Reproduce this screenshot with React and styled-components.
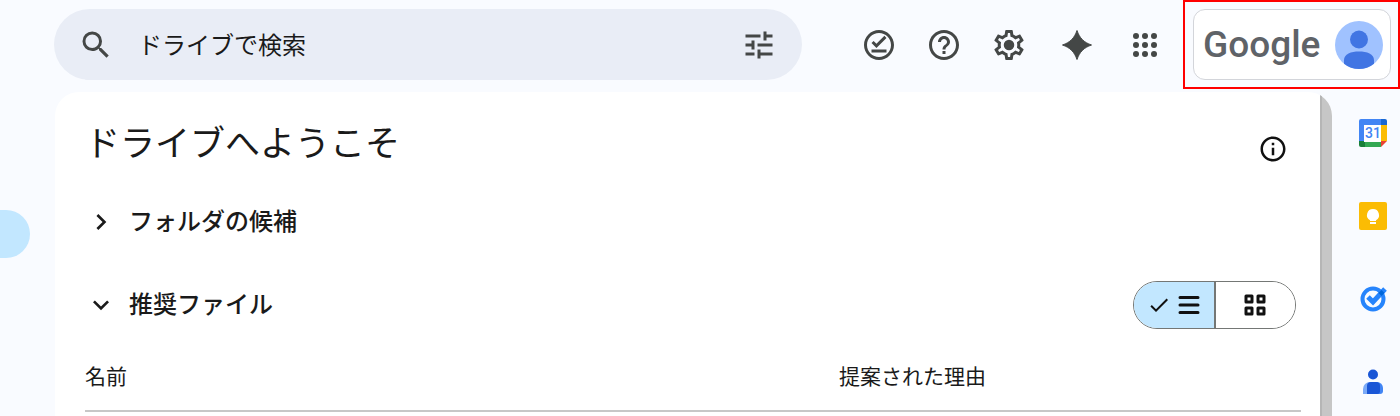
import React, { useState } from 'react';
import styled, { createGlobalStyle } from 'styled-components';
import {
  MdCheck,
  MdChevronRight,
  MdExpandMore,
  MdHelpOutline,
  MdInfoOutline,
  MdOutlineOfflinePin,
  MdSearch,
  MdTune,
} from 'react-icons/md';

const GlobalStyle = createGlobalStyle`
  * {
    box-sizing: border-box;
  }
  body {
    margin: 0;
    background: #f9fbff;
    color: #1a1a1a;
    font-family: 'Noto Sans CJK JP', sans-serif;
    overflow: hidden;
  }
`;
const Page = styled.div`
  display: flex;
  flex-direction: column;
  min-height: 100vh;
`;
const Header = styled.header`
  display: flex;
  align-items: flex-start;
  justify-content: space-between;
  height: 92px;
  padding-left: 54px;
`;
const Search = styled.form`
  display: flex;
  align-items: center;
  flex: 0 1 748px;
  height: 71px;
  margin-top: 9px;
  padding: 0 25px 0 24px;
  border-radius: 36px;
  background: #e9edf6;
`;
const IconButton = styled.button`
  display: flex;
  align-items: center;
  justify-content: center;
  flex: none;
  width: ${(props) => props.$size || 36}px;
  height: ${(props) => props.$size || 36}px;
  padding: 0;
  border: 0;
  background: none;
  color: ${(props) => props.$color || '#444746'};
`;
const SearchInput = styled.input`
  flex: 1;
  min-width: 0;
  height: 36px;
  padding: 0 24px 2px;
  border: 0;
  outline: 0;
  background: none;
  color: #1a1a1a;
  font: 400 24px 'Noto Sans CJK JP', sans-serif;
  &::placeholder {
    color: #1a1a1a;
    opacity: 1;
  }
`;
const Tools = styled.div`
  display: flex;
  align-items: flex-start;
`;
const Actions = styled.nav`
  display: flex;
  align-items: center;
  gap: 29px;
  height: 89px;
  padding-right: 20px;
`;
const Highlight = styled.div`
  height: 89px;
  padding: 7px 7px 7px 8px;
  border: 2px solid #f00;
`;
const Account = styled.button`
  display: flex;
  align-items: center;
  justify-content: space-between;
  width: 198px;
  height: 71px;
  padding: 0 7px 0 9px;
  border: 1px solid #d3d5da;
  border-radius: 12px;
  background: #fff;
`;
const Brand = styled.span`
  color: #5f6368;
  font: 500 37px/48px Roboto, sans-serif;
`;
const Body = styled.div`
  display: flex;
  flex: 1;
`;
const Rail = styled.aside`
  flex: none;
  width: 55px;
  padding-top: 118px;
`;
const RailItem = styled.a`
  display: block;
  width: 30px;
  height: 48px;
  border-radius: 0 24px 24px 0;
  background: #c2e7ff;
`;
const Panel = styled.main`
  display: flex;
  flex: 1;
  min-width: 0;
  border-radius: 24px 24px 0 0;
  background: #fff;
  overflow: hidden;
`;
const Content = styled.div`
  flex: 1;
  min-width: 0;
  padding: 24px 19px 0 30px;
`;
const Scrollbar = styled.div`
  flex: none;
  width: 12px;
  border-left: 2px solid #b5b5b5;
  background: #c6c6c6;
`;
const TitleRow = styled.div`
  display: flex;
  align-items: flex-start;
  justify-content: space-between;
  height: 56px;
  padding-right: 13px;
`;
const Title = styled.h1`
  margin: 0;
  font-size: 35px;
  font-weight: 400;
  line-height: 50px;
`;
const InfoSlot = styled.div`
  padding-top: 18px;
`;
const Section = styled.section`
  display: flex;
  align-items: center;
  justify-content: space-between;
  height: 48px;
  margin-top: ${(props) => props.$gap}px;
  padding-right: 5px;
`;
const SectionTitle = styled.h2`
  margin: 0;
  font-size: 24px;
  font-weight: 500;
`;
const Toggle = styled.button`
  display: flex;
  align-items: center;
  gap: 12px;
  padding: 0;
  border: 0;
  background: none;
  color: inherit;
  font: inherit;
`;
const ToggleLabel = styled.span`
  padding-bottom: 5px;
`;
const ViewSwitch = styled.div`
  display: flex;
  width: 163px;
  height: 48px;
  border: 1px solid #747775;
  border-radius: 24px;
  overflow: hidden;
`;
const ViewButton = styled.button`
  display: flex;
  align-items: center;
  justify-content: center;
  gap: 7px;
  flex: 1;
  padding: 0;
  border: 0;
  background: ${(props) => (props.$active ? '#c2e7ff' : '#fff')};
  color: #111;
  & + & {
    border-left: 2px solid #747775;
  }
`;
const Table = styled.table`
  width: 100%;
  margin-top: 22px;
  border-collapse: collapse;
  table-layout: fixed;
`;
const Th = styled.th`
  width: ${(props) => props.$width};
  height: 60px;
  padding: 0 0 12px;
  border-bottom: 2px solid #c7c7c7;
  font-size: 21px;
  font-weight: 400;
  line-height: 30px;
  text-align: left;
`;
const SidePanel = styled.nav`
  display: flex;
  flex-direction: column;
  align-items: center;
  gap: 51px;
  flex: none;
  width: 68px;
  padding: 25px 0 0 14px;
`;
const SideLink = styled.a`
  display: block;
  width: 32px;
  height: 32px;
`;

const GearIcon = () => (
  <svg width="36" height="36" viewBox="0 0 24 24" fill="currentColor">
    <path d="M19.43 12.98c.04-.32.07-.64.07-.98 0-.34-.03-.66-.07-.98l2.11-1.65c.19-.15.24-.42.12-.64l-2-3.46c-.09-.16-.26-.25-.44-.25-.06 0-.12.01-.17.03l-2.49 1c-.52-.4-1.08-.73-1.69-.98l-.38-2.65C14.46 2.18 14.25 2 14 2h-4c-.25 0-.46.18-.49.42l-.38 2.65c-.61.25-1.17.59-1.69.98l-2.49-1c-.06-.02-.12-.03-.18-.03-.17 0-.34.09-.43.25l-2 3.46c-.13.22-.07.49.12.64l2.11 1.65c-.04.32-.07.65-.07.98 0 .33.03.66.07.98l-2.11 1.65c-.19.15-.24.42-.12.64l2 3.46c.09.16.26.25.44.25.06 0 .12-.01.17-.03l2.49-1c.52.4 1.08.73 1.69.98l.38 2.65c.03.24.24.42.49.42h4c.25 0 .46-.18.49-.42l.38-2.65c.61-.25 1.17-.59 1.69-.98l2.49 1c.06.02.12.03.18.03.17 0 .34-.09.43-.25l2-3.46c.12-.22.07-.49-.12-.64l-2.11-1.65zm-1.98-1.71c.04.31.05.52.05.73 0 .21-.02.43-.05.73l-.14 1.13.89.7 1.08.84-.7 1.21-1.27-.51-1.04-.42-.9.68c-.43.32-.84.56-1.25.73l-1.06.43-.16 1.13-.2 1.35h-1.4l-.19-1.35-.16-1.13-1.06-.43c-.43-.18-.83-.41-1.23-.71l-.91-.7-1.06.43-1.27.51-.7-1.21 1.08-.84.89-.7-.14-1.13c-.03-.31-.05-.54-.05-.74s.02-.43.05-.73l.14-1.13-.89-.7-1.08-.84.7-1.21 1.27.51 1.04.42.9-.68c.43-.32.84-.56 1.25-.73l1.06-.43.16-1.13.2-1.35h1.39l.19 1.35.16 1.13 1.06.43c.43.18.83.41 1.23.71l.91.7 1.06-.43 1.27-.51.7 1.21-1.07.85-.89.7.14 1.13z" />
    <circle cx="12" cy="12" r="3.5" />
  </svg>
);

const SparkIcon = () => (
  <svg width="36" height="36" viewBox="0 0 36 36">
    <path
      d="M18 3.500C20.500 11 25 15.500 32.500 18C25 20.500 20.500 25 18 32.500C15.500 25 11 20.500 3.500 18C11 15.500 15.500 11 18 3.500Z"
      fill="currentColor"
      stroke="currentColor"
      strokeLinejoin="round"
    />
  </svg>
);

const AppsIcon = () => (
  <svg width="36" height="36" viewBox="0 0 36 36" fill="currentColor">
    {[9, 18, 27].map((y) => [9, 18, 27].map((x) => <circle key={`${x}-${y}`} cx={x} cy={y} r="3" />))}
  </svg>
);

const Avatar = () => (
  <svg width="48" height="48" viewBox="0 0 48 48">
    <circle cx="24" cy="24" r="24" fill="#a0c2ff" />
    <circle cx="24" cy="18.5" r="9" fill="#4175e3" />
    <path d="M9 42.700V39c0-6 7-8.500 15-8.500S39 33 39 39v3.700A24 24 0 0 1 9 42.700Z" fill="#4175e3" />
  </svg>
);

const ListIcon = () => (
  <svg width="22" height="20" viewBox="0 0 22 20" stroke="currentColor" strokeWidth="3" strokeLinecap="round">
    <path d="M2 2.500h18M2 10h18M2 17.500h18" />
  </svg>
);

const GridIcon = () => (
  <svg
    width="22"
    height="22"
    viewBox="0 0 22 22"
    fill="none"
    stroke="currentColor"
    strokeWidth="3"
    strokeLinejoin="round"
  >
    <path d="M2 2h6v6H2zM14 2h6v6h-6zM2 14h6v6H2zM14 14h6v6h-6z" />
  </svg>
);

const CalendarIcon = () => (
  <svg width="32" height="32" viewBox="0 0 32 32">
    <path d="M4 2h20v6H8v16H2V4a2 2 0 0 1 2-2Z" fill="#4285f4" />
    <path d="M24 2h4a2 2 0 0 1 2 2v4h-6z" fill="#1967d2" />
    <path d="M24 8h6v16h-6z" fill="#fbbc04" />
    <path d="M8 24h16v6H8z" fill="#34a853" />
    <path d="M2 24h6v6H4a2 2 0 0 1-2-2z" fill="#188038" />
    <path d="M24 24h6l-6 6z" fill="#ea4335" />
    <path d="M7 8h17v17H7z" fill="#fff" />
    <text x="16" y="21" fill="#4285f4" fontFamily="Roboto, sans-serif" fontSize="14" fontWeight="500" textAnchor="middle">
      31
    </text>
  </svg>
);

const KeepIcon = () => (
  <svg width="32" height="32" viewBox="0 0 32 32">
    <rect x="2" y="2" width="28" height="28" rx="2" fill="#fbbc04" />
    <path d="M16 9a6 6 0 0 0-3 11.200V21h6v-.8A6 6 0 0 0 16 9ZM13 22h6v2h-6z" fill="#fff" />
  </svg>
);

const TasksIcon = () => (
  <svg width="32" height="32" viewBox="0 0 32 32" fill="none">
    <circle cx="16" cy="16" r="10.5" stroke="#2684fc" strokeWidth="4" />
    <path d="M11 14l5 5L28 6" stroke="#2684fc" strokeWidth="5" />
    <path d="M21.500 10l3-3 3 3-3 3z" fill="#0066da" />
  </svg>
);

const ContactsIcon = () => (
  <svg width="32" height="32" viewBox="0 0 32 32">
    <circle cx="16" cy="8.5" r="5" fill="#1a56d6" />
    <path d="M6 28v-5a7 7 0 0 1 7-7h5v12z" fill="#7baaf7" />
    <path d="M14 16h6a6 6 0 0 1 6 6v3a3 3 0 0 1-3 3h-9z" fill="#4285f4" />
    <path d="M14 16h5a4 4 0 0 1 4 4v5a3 3 0 0 1-3 3H10v-8a4 4 0 0 1 4-4z" fill="#1a56d6" />
  </svg>
);

const sideApps = [
  { name: 'カレンダー', icon: <CalendarIcon /> },
  { name: 'Keep', icon: <KeepIcon /> },
  { name: 'ToDo リスト', icon: <TasksIcon /> },
  { name: '連絡先', icon: <ContactsIcon /> },
];

const App = () => {
  const [view, setView] = useState('list');

  return (
    <Page>
      <GlobalStyle />
      <Header>
        <Search role="search">
          <IconButton type="button" aria-label="検索">
            <MdSearch size={36} />
          </IconButton>
          <SearchInput aria-label="ドライブで検索" placeholder="ドライブで検索" />
          <IconButton type="button" aria-label="検索オプション">
            <MdTune size={36} />
          </IconButton>
        </Search>
        <Tools>
          <Actions>
            <IconButton aria-label="オフライン">
              <MdOutlineOfflinePin size={36} />
            </IconButton>
            <IconButton aria-label="サポート">
              <MdHelpOutline size={36} />
            </IconButton>
            <IconButton aria-label="設定">
              <GearIcon />
            </IconButton>
            <IconButton $size={42} aria-label="Gemini">
              <SparkIcon />
            </IconButton>
            <IconButton aria-label="アプリ">
              <AppsIcon />
            </IconButton>
          </Actions>
          <Highlight>
            <Account>
              <Brand>Google</Brand>
              <Avatar />
            </Account>
          </Highlight>
        </Tools>
      </Header>
      <Body>
        <Rail>
          <RailItem href="#home" aria-label="ホーム" />
        </Rail>
        <Panel>
          <Content>
            <TitleRow>
              <Title>ドライブへようこそ</Title>
              <InfoSlot>
                <IconButton $size={30} $color="#111" aria-label="詳細">
                  <MdInfoOutline size={30} />
                </IconButton>
              </InfoSlot>
            </TitleRow>
            <Section $gap={26}>
              <SectionTitle>
                <Toggle aria-expanded="false">
                  <MdChevronRight size={32} />
                  <ToggleLabel>フォルダの候補</ToggleLabel>
                </Toggle>
              </SectionTitle>
            </Section>
            <Section $gap={35}>
              <SectionTitle>
                <Toggle aria-expanded="true">
                  <MdExpandMore size={32} />
                  <ToggleLabel>推奨ファイル</ToggleLabel>
                </Toggle>
              </SectionTitle>
              <ViewSwitch>
                <ViewButton $active={view === 'list'} onClick={() => setView('list')} aria-label="リスト">
                  {view === 'list' && <MdCheck size={24} />}
                  <ListIcon />
                </ViewButton>
                <ViewButton $active={view === 'grid'} onClick={() => setView('grid')} aria-label="グリッド">
                  {view === 'grid' && <MdCheck size={24} />}
                  <GridIcon />
                </ViewButton>
              </ViewSwitch>
            </Section>
            <Table>
              <thead>
                <tr>
                  <Th $width="62%">名前</Th>
                  <Th $width="38%">提案された理由</Th>
                </tr>
              </thead>
            </Table>
          </Content>
          <Scrollbar />
        </Panel>
        <SidePanel>
          {sideApps.map((app) => (
            <SideLink key={app.name} href="#app" aria-label={app.name}>
              {app.icon}
            </SideLink>
          ))}
        </SidePanel>
      </Body>
    </Page>
  );
};

export default App;
